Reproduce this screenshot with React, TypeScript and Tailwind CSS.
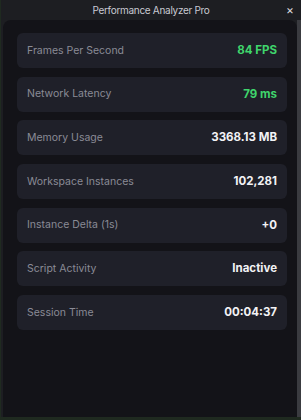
import React from "react";

const rows: { label: string; value: string; green?: boolean }[] = [
  { label: "Frames Per Second", value: "84 FPS", green: true },
  { label: "Network Latency", value: "79 ms", green: true },
  { label: "Memory Usage", value: "3368.13 MB" },
  { label: "Workspace Instances", value: "102,281" },
  { label: "Instance Delta (1s)", value: "+0" },
  { label: "Script Activity", value: "Inactive" },
  { label: "Session Time", value: "00:04:37" },
];

export default function App() {
  return (
    <div
      className="w-[301px] h-[420px] bg-[#1f2a20] pl-px pb-[3px] flex flex-col"
      style={{ fontFamily: "Inter, 'Noto Sans', sans-serif" }}
    >
      <div className="flex-1 flex flex-col bg-[#1d1e22]">
        <div className="h-[20px] relative flex items-center justify-center shrink-0">
          <span className="text-[10px] text-[#c9cad2] tracking-[-0.3px]">Performance Analyzer Pro</span>
          <span className="absolute right-[7px] top-[3px] text-[12px] leading-[14px] text-[#d8d8dc]">×</span>
        </div>
        <div className="flex-1 flex">
          <div className="flex-1 ml-[2px] bg-[#131318] rounded-t-[8px] pl-[14px] pr-[10px] pt-[13px] flex flex-col gap-[8.67px]">
            {rows.map((r) => (
              <div
                key={r.label}
                className="h-[35px] shrink-0 rounded-[6px] bg-[#1f2029] flex items-center justify-between pl-[10px] pr-[10px]"
              >
                <span className="text-[10.5px] text-[#8a8b96]">{r.label}</span>
                <span
                  className={
                    "text-[11.5px] font-bold " + (r.green ? "text-[#3fd56c]" : "text-[#f2f2f5]")
                  }
                >
                  {r.value}
                </span>
              </div>
            ))}
          </div>
          <div className="w-[4px] bg-[#3a3b40]" />
        </div>
      </div>
    </div>
  );
}
